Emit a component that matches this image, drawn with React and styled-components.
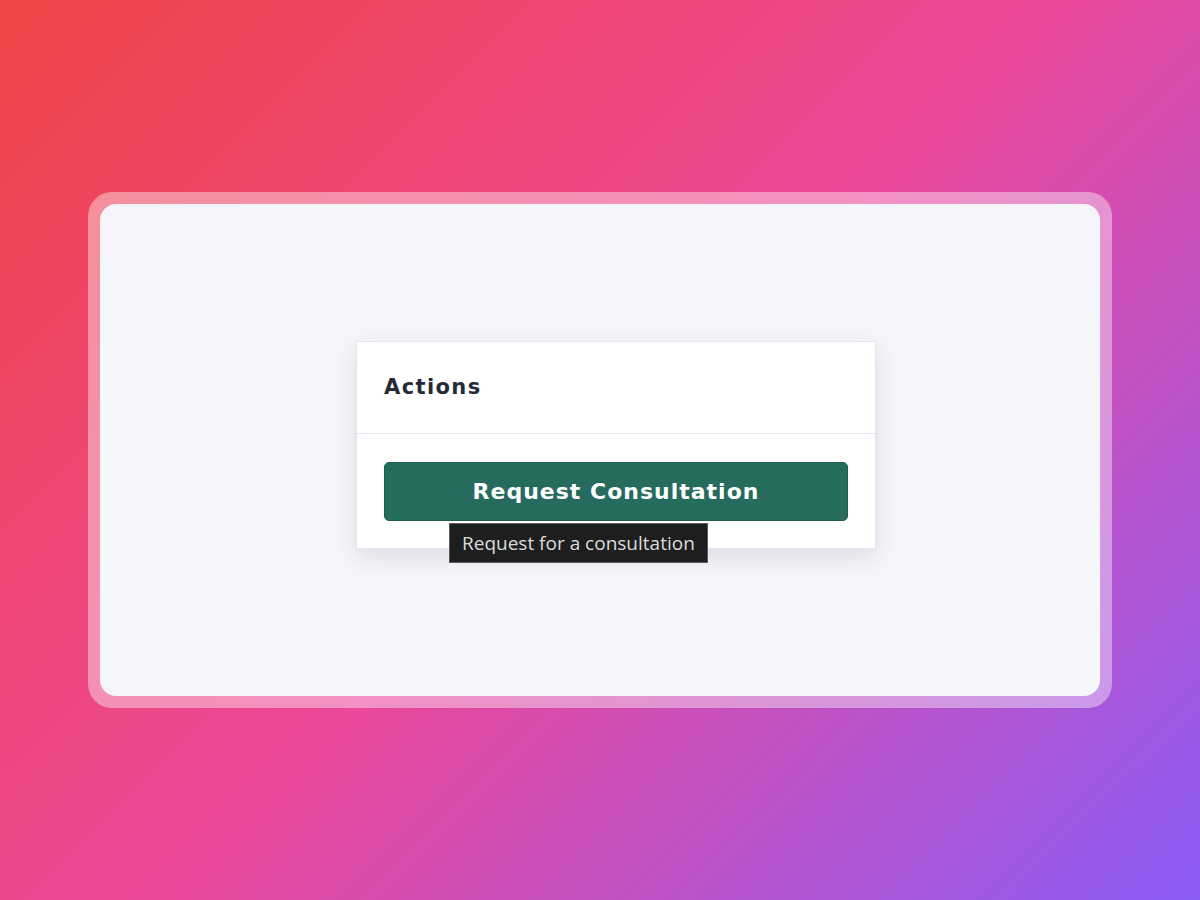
import styled, { createGlobalStyle } from "styled-components"

const Global = createGlobalStyle`
  html, body {
    margin: 0;
    padding: 0;
  }
  body {
    font-family: "DejaVu Sans", "Liberation Sans", sans-serif;
  }
`

const Page = styled.div`
  width: 1200px;
  height: 900px;
  display: flex;
  align-items: center;
  justify-content: center;
  background: linear-gradient(135deg, #ef4444 0%, #ec4899 50%, #8b5cf6 100%);
`

const Frame = styled.div`
  padding: 12px;
  border-radius: 24px;
  background: rgba(255, 255, 255, 0.4);
`

const Panel = styled.div`
  width: 1000px;
  height: 492px;
  border-radius: 16px;
  background: #f5f6fa;
  display: flex;
  align-items: center;
  justify-content: center;
`

const Card = styled.div`
  width: 518px;
  margin: 0 0 11px 32px;
  background: #fff;
  border: 1px solid #e3e7eb;
  box-shadow: 0 8px 22px rgba(40, 50, 80, 0.12);
`

const Header = styled.div`
  height: 91px;
  display: flex;
  align-items: center;
  padding: 0 27px;
  border-bottom: 1px solid #e3e8ec;
`

const Title = styled.h3`
  margin: 0;
  font-size: 21px;
  font-weight: 700;
  color: #262a36;
  letter-spacing: 1.4px;
`

const Body = styled.div`
  padding: 28px 27px 27px;
`

const ButtonWrap = styled.div`
  position: relative;
`

const Button = styled.button`
  width: 100%;
  height: 59px;
  border: 1px solid #1f5d51;
  border-radius: 5px;
  background: #256b5e;
  color: #fff;
  font-family: "DejaVu Sans", "Liberation Sans", sans-serif;
  font-size: 22px;
  font-weight: 700;
  letter-spacing: 1px;
  cursor: pointer;
`

const Tooltip = styled.div`
  position: absolute;
  left: 65px;
  top: 61px;
  padding: 0 12px;
  height: 38px;
  display: flex;
  align-items: center;
  background: #1e1e1e;
  border: 1px solid #5a5a5a;
  color: #dcdcdc;
  font-family: "Open Sans", "Liberation Sans", sans-serif;
  font-size: 19px;
  white-space: nowrap;
`

function App() {
  return (
    <>
      <Global />
      <Page>
        <Frame>
          <Panel>
            <Card>
              <Header>
                <Title>Actions</Title>
              </Header>
              <Body>
                <ButtonWrap>
                  <Button>Request Consultation</Button>
                  <Tooltip>Request for a consultation</Tooltip>
                </ButtonWrap>
              </Body>
            </Card>
          </Panel>
        </Frame>
      </Page>
    </>
  )
}

export default App
